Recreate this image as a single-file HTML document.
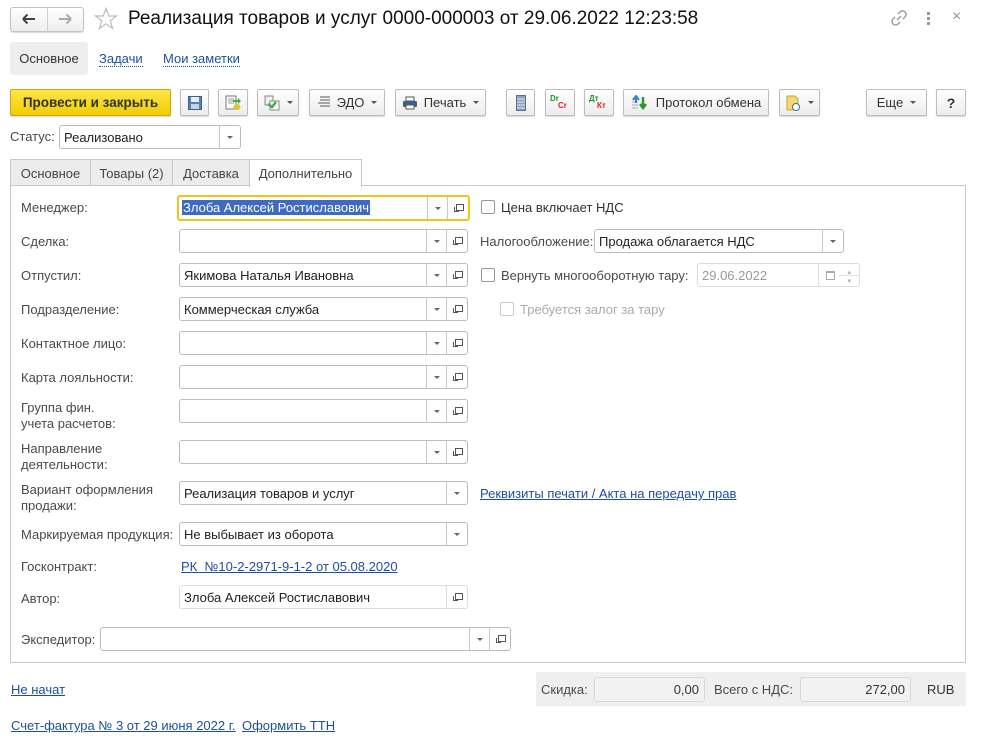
<!DOCTYPE html>
<html><head><meta charset="utf-8">
<style>
*{box-sizing:border-box;margin:0;padding:0}
body{width:981px;height:742px;background:#fff;font-family:"Liberation Sans",Arial,sans-serif;font-size:13px;color:#333;position:relative;overflow:hidden}
.a{position:absolute}
.btn{position:absolute;top:89px;height:27px;border:1px solid #bdbdbd;border-radius:2px;background:linear-gradient(#fff,#ececec);box-shadow:0 1px 1px rgba(0,0,0,.15);display:flex;align-items:center;justify-content:center;font-size:13px;color:#333}
.dd{display:inline-block;width:0;height:0;border-left:3px solid transparent;border-right:3px solid transparent;border-top:3px solid #555;margin-left:7px}
.lbl{position:absolute;left:21px;color:#4a4a4a;font-size:13px;line-height:16px}
.inp{position:absolute;left:179px;width:289px;height:24px;border:1px solid #bcbcbc;border-radius:3px;background:#fff}
.inp .t{position:absolute;left:4px;top:4px;color:#222;white-space:nowrap}
.inp .d{position:absolute;top:0;bottom:0;width:21px;border-left:1px solid #c8c8c8}
.inp .d:after{content:"";position:absolute;left:7px;top:10px;border-left:3px solid transparent;border-right:3px solid transparent;border-top:3px solid #666}
.inp .o{position:absolute;top:0;bottom:0;right:0;width:21px;border-left:1px solid #c8c8c8}
.inp .o:after{content:"";position:absolute;left:8px;top:7px;width:6px;height:5px;border:1px solid #555}
.inp .o:before{content:"";position:absolute;left:6px;top:10px;width:4px;height:4px;border-left:1px solid #555;border-bottom:1px solid #555}
.cb{position:absolute;width:14px;height:14px;border:1px solid #999;border-radius:2px;background:#fff}
a,.lnk{color:#1d4f9e;text-decoration:underline}
.tab{position:absolute;top:159px;height:27px;border:1px solid #c8c8c8;border-bottom:none;background:#ececec;color:#444;display:flex;align-items:center;justify-content:center}
</style></head><body>
<!-- nav -->
<div class="a" style="left:10px;top:7px;width:74px;height:25px;border:1px solid #c2c2c2;border-radius:3px;background:linear-gradient(#fff,#eee);box-shadow:0 1px 1px rgba(0,0,0,.15)"></div>
<div class="a" style="left:47px;top:8px;width:1px;height:23px;background:#d0d0d0"></div>
<svg class="a" style="left:22px;top:13px" width="14" height="12"><path d="M1 6H13M1 6L5.5 1.5M1 6L5.5 10.5" stroke="#444" stroke-width="2" fill="none"/></svg>
<svg class="a" style="left:58px;top:13px" width="14" height="12"><path d="M1 6H13M13 6L8.5 1.5M13 6L8.5 10.5" stroke="#aaa" stroke-width="2" fill="none"/></svg>
<svg class="a" style="left:94px;top:7px" width="24" height="24"><path d="M12 1.5L14.8 9H22.5L16.3 13.7L18.6 21.5L12 16.8L5.4 21.5L7.7 13.7L1.5 9H9.2Z" fill="none" stroke="#bbb" stroke-width="1.2"/></svg>
<div class="a" style="left:128px;top:8px;font-size:19px;color:#111;white-space:nowrap">Реализация товаров и услуг 0000-000003 от 29.06.2022 12:23:58</div>
<svg class="a" style="left:890px;top:9px" width="18" height="18"><path d="M7 11L11 7M8 5L10 3a3 3 0 0 1 5 5L13 10M10 13L8 15a3 3 0 0 1-5-5L5 8" stroke="#999" stroke-width="1.4" fill="none"/></svg>
<div class="a" style="left:927px;top:12px;width:3px;height:3px;background:#999;box-shadow:0 5px 0 #999,0 10px 0 #999"></div>
<div class="a" style="left:952px;top:8px;color:#999;font-size:16px">×</div>
<!-- top tabs -->
<div class="a" style="left:10px;top:42px;width:78px;height:33px;background:#eee;border-radius:3px;display:flex;align-items:center;justify-content:center;color:#333">Основное</div>
<div class="a" style="left:99px;top:51px;color:#1d4f9e;border-bottom:1px dotted #1d4f9e;line-height:15px">Задачи</div>
<div class="a" style="left:163px;top:51px;color:#1d4f9e;border-bottom:1px dotted #1d4f9e;line-height:15px">Мои заметки</div>
<!-- toolbar -->
<div class="btn" style="left:10px;width:161px;background:linear-gradient(#fde649,#f0cc00);border-color:#c9a800;font-weight:bold;color:#333;font-size:13.5px">Провести и закрыть</div>
<div class="btn" style="left:180px;width:29px"><svg width="14" height="14"><rect x="0.5" y="0.5" width="13" height="13" fill="#5a7fae" stroke="#3d5f8c"/><rect x="3" y="1" width="8" height="5" fill="#e8eef6"/><rect x="3" y="8" width="8" height="5" fill="#c3d2e6"/></svg></div>
<div class="btn" style="left:218px;width:30px"><svg width="16" height="16"><rect x="1" y="1" width="10" height="13" fill="#fff" stroke="#777"/><path d="M3 4h6M3 6h6M3 8h6" stroke="#999"/><ellipse cx="12" cy="12" rx="3.5" ry="3" fill="#e6c22e"/><path d="M8 5h5v-2l3 3-3 3v-2h-5z" fill="#3bb03b"/></svg></div>
<div class="btn" style="left:257px;width:42px"><svg width="16" height="16"><rect x="1" y="1" width="8" height="9" fill="#eee" stroke="#888"/><rect x="6" y="6" width="9" height="9" fill="#fff" stroke="#888"/><path d="M4 9l4 3 4-5" stroke="#3bb03b" stroke-width="2.5" fill="none"/></svg><span class="dd"></span></div>
<div class="btn" style="left:309px;width:76px"><svg width="14" height="13"><path d="M3 1h10M3 4h10M1 7h12M3 10h10" stroke="#777" stroke-width="1.3"/></svg><span style="margin-left:6px">ЭДО</span><span class="dd"></span></div>
<div class="btn" style="left:395px;width:91px"><svg width="16" height="14"><rect x="4" y="1" width="8" height="4" fill="#fff" stroke="#555"/><rect x="1" y="5" width="14" height="6" rx="1" fill="#3e5f8a"/><rect x="4" y="9" width="8" height="4" fill="#fff" stroke="#555"/></svg><span style="margin-left:6px">Печать</span><span class="dd"></span></div>
<div class="btn" style="left:506px;width:29px"><svg width="10" height="16"><rect x="0.5" y="0.5" width="9" height="15" fill="#8da2bd" stroke="#5a6f8c"/><path d="M1 4h8M1 7h8M1 10h8M1 13h8" stroke="#e0e8f2"/></svg></div>
<div class="btn" style="left:545px;width:30px;font-size:8px;font-weight:bold;line-height:8px"><div style="position:relative;width:20px;height:16px"><span style="position:absolute;left:0;top:0;color:#1a9a2a">Dr</span><span style="position:absolute;left:8px;top:7px;color:#e02020">Cr</span></div></div>
<div class="btn" style="left:584px;width:30px;font-size:8px;font-weight:bold;line-height:8px"><div style="position:relative;width:20px;height:16px"><span style="position:absolute;left:0;top:0;color:#1a9a2a">Дт</span><span style="position:absolute;left:8px;top:7px;color:#e02020">Кт</span></div></div>
<div class="btn" style="left:623px;width:146px"><svg width="18" height="16"><path d="M1 4h6M1 7h6M1 10h6M1 13h6" stroke="#aaa"/><path d="M5 8V2M2 5l3-4 3 4" stroke="#3a7fd0" stroke-width="2" fill="none"/><path d="M12 2v11M9 9l3 4 3-4" stroke="#2a9a2a" stroke-width="2.5" fill="none"/></svg><span style="margin-left:7px">Протокол обмена</span></div>
<div class="btn" style="left:779px;width:41px"><svg width="16" height="16"><path d="M2 1h8l3 3v11H2z" fill="#f5d870" stroke="#c9a530"/><circle cx="11" cy="12" r="3.5" fill="#fff" stroke="#3a6fb0"/></svg><span class="dd"></span></div>
<div class="btn" style="left:866px;width:61px">Еще<span class="dd"></span></div>
<div class="btn" style="left:936px;width:30px;font-weight:bold;font-size:14px">?</div>
<!-- status -->
<div class="a" style="left:10px;top:129px;color:#4a4a4a">Статус:</div>
<div class="inp" style="left:59px;top:125px;width:182px"><span class="t">Реализовано</span><span class="d" style="right:0"></span></div>
<!-- tabs -->
<div class="tab" style="left:10px;width:81px">Основное</div>
<div class="tab" style="left:90px;width:83px">Товары (2)</div>
<div class="tab" style="left:172px;width:78px">Доставка</div>
<div class="tab" style="left:249px;width:113px;background:#fff;height:28px;z-index:2">Дополнительно</div>
<div class="a" style="left:10px;top:185px;width:956px;height:478px;border:1px solid #c8c8c8"></div>
<!-- left column -->
<div class="lbl" style="top:200px">Менеджер:</div>
<div class="inp" style="top:195px;left:177px;width:293px;height:26px;border:2px solid #f2c318"><span class="t" style="left:3px;top:3px;background:#3d6bc4;color:#fff;padding:0 1px">Злоба Алексей Ростиславович</span><span class="d" style="right:20px"></span><span class="o"></span></div>
<div class="lbl" style="top:234px">Сделка:</div>
<div class="inp" style="top:229px"><span class="d" style="right:20px"></span><span class="o"></span></div>
<div class="lbl" style="top:268px">Отпустил:</div>
<div class="inp" style="top:263px"><span class="t">Якимова Наталья Ивановна</span><span class="d" style="right:20px"></span><span class="o"></span></div>
<div class="lbl" style="top:302px">Подразделение:</div>
<div class="inp" style="top:297px"><span class="t">Коммерческая служба</span><span class="d" style="right:20px"></span><span class="o"></span></div>
<div class="lbl" style="top:336px">Контактное лицо:</div>
<div class="inp" style="top:331px"><span class="d" style="right:20px"></span><span class="o"></span></div>
<div class="lbl" style="top:370px">Карта лояльности:</div>
<div class="inp" style="top:365px"><span class="d" style="right:20px"></span><span class="o"></span></div>
<div class="lbl" style="top:400px">Группа фин.<br>учета расчетов:</div>
<div class="inp" style="top:399px"><span class="d" style="right:20px"></span><span class="o"></span></div>
<div class="lbl" style="top:441px">Направление<br>деятельности:</div>
<div class="inp" style="top:440px"><span class="d" style="right:20px"></span><span class="o"></span></div>
<div class="lbl" style="top:482px">Вариант оформления<br>продажи:</div>
<div class="inp" style="top:481px"><span class="t">Реализация товаров и услуг</span><span class="d" style="right:0"></span></div>
<div class="lbl" style="top:527px">Маркируемая продукция:</div>
<div class="inp" style="top:522px"><span class="t">Не выбывает из оборота</span><span class="d" style="right:0"></span></div>
<div class="lbl" style="top:559px">Госконтракт:</div>
<div class="a lnk" style="left:181px;top:559px">РК&nbsp;&nbsp;№10-2-2971-9-1-2 от 05.08.2020</div>
<div class="lbl" style="top:591px">Автор:</div>
<div class="inp" style="top:585px;background:#fff;border-color:#dcdcdc"><span class="t">Злоба Алексей Ростиславович</span><span class="o" style="border-left-color:#dcdcdc"></span></div>
<div class="lbl" style="top:632px">Экспедитор:</div>
<div class="inp" style="top:627px;left:100px;width:411px"><span class="d" style="right:20px"></span><span class="o"></span></div>
<!-- right column -->
<div class="cb" style="left:481px;top:200px"></div>
<div class="a" style="left:501px;top:200px;color:#333">Цена включает НДС</div>
<div class="a" style="left:480px;top:234px;color:#4a4a4a">Налогообложение:</div>
<div class="inp" style="left:594px;top:229px;width:250px"><span class="t">Продажа облагается НДС</span><span class="d" style="right:0"></span></div>
<div class="cb" style="left:481px;top:268px"></div>
<div class="a" style="left:501px;top:268px;color:#4a4a4a">Вернуть многооборотную тару:</div>
<div class="inp" style="left:697px;top:263px;width:163px;border-color:#dcdcdc"><span class="t" style="color:#999">29.06.2022</span>
<span class="a" style="right:20px;top:0;bottom:0;width:21px;border-left:1px solid #e0e0e0"></span>
<span class="a" style="right:24px;top:7px;width:9px;height:9px;border:1px solid #aaa;border-top-width:2px"></span>
<span class="a" style="right:0;top:11px;width:20px;height:1px;background:#e0e0e0"></span>
<span class="a" style="right:8px;top:4px;color:#aaa;font-size:7px">▴</span><span class="a" style="right:8px;top:13px;color:#aaa;font-size:7px">▾</span></div>
<div class="cb" style="left:500px;top:302px;border-color:#ccc"></div>
<div class="a" style="left:520px;top:302px;color:#aaa">Требуется залог за тару</div>
<div class="a lnk" style="left:480px;top:486px">Реквизиты печати / Акта на передачу прав</div>
<!-- bottom -->
<div class="a lnk" style="left:11px;top:682px">Не начат</div>
<div class="a" style="left:536px;top:672px;width:430px;height:34px;background:#efefef"></div>
<div class="a" style="left:541px;top:682px;color:#4a4a4a">Скидка:</div>
<div class="a" style="left:594px;top:677px;width:111px;height:25px;border:1px solid #d8d8d8;border-radius:3px;background:#f2f2f2;text-align:right;padding:4px 5px 0 0;color:#333">0,00</div>
<div class="a" style="left:714px;top:682px;color:#4a4a4a">Всего с НДС:</div>
<div class="a" style="left:800px;top:677px;width:111px;height:25px;border:1px solid #d8d8d8;border-radius:3px;background:#f2f2f2;text-align:right;padding:4px 5px 0 0;color:#333">272,00</div>
<div class="a" style="left:927px;top:682px;color:#333">RUB</div>
<div class="a lnk" style="left:11px;top:718px">Счет-фактура № 3 от 29 июня 2022 г.</div>
<div class="a lnk" style="left:242px;top:718px">Оформить ТТН</div>
</body></html>
